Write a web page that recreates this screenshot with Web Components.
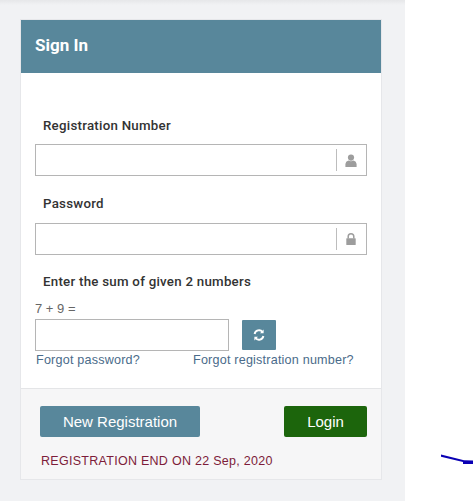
<!DOCTYPE html>
<html>
<head>
<meta charset="utf-8">
<title>Sign In</title>
<style>
  html, body { margin: 0; height: 100%; background: #fff; overflow: hidden; }
  body { font-family: "Liberation Sans", Arial, sans-serif; }
</style>
</head>
<body>

<login-page>
  <sign-in-card title="Sign In">
    <form-field label="Registration Number" icon="user"></form-field>
    <form-field label="Password" icon="lock" style="margin-top:20px;--label-gap:11px"></form-field>
    <captcha-field label="Enter the sum of given 2 numbers" sum="7 + 9 ="></captcha-field>
    <div slot="footer">
      <action-button color="#58879b" width="160">New Registration</action-button>
      <action-button color="#1c650c" width="83">Login</action-button>
    </div>
    <span slot="notice">REGISTRATION END ON 22 Sep, 2020</span>
  </sign-in-card>
</login-page>

<script>
// outer page: grey column with the card, white strip on the right
class LoginPage extends HTMLElement {
  constructor() {
    super();
    this.attachShadow({ mode: 'open' });
    this.shadowRoot.innerHTML = `
      <style>
        :host { display: flex; width: 473px; height: 501px; position: relative; }
        .column {
          width: 405px;
          height: 501px;
          box-sizing: border-box;
          padding: 20px 24px 0 21px;
          background: linear-gradient(#e6e7e9, #f1f2f4 5px);
        }
        svg { position: absolute; left: 441px; top: 453px; }
      </style>
      <div class="column"><slot></slot></div>
      <svg width="32" height="12" viewBox="0 0 32 12">
        <path d="M0 1.4 L0 3.8 L22 9 L22 11 L32 11 L32 7.6 L23 7.2 Z" fill="#0a00b4"/>
      </svg>
    `;
  }
}
customElements.define('login-page', LoginPage);

class SignInCard extends HTMLElement {
  constructor() {
    super();
    this.attachShadow({ mode: 'open' });
    this.shadowRoot.innerHTML = `
      <style>
        :host { display: block; width: 360px; height: 459px; }
        .card {
          height: 100%;
          box-sizing: border-box;
          display: flex;
          flex-direction: column;
          background: #fff;
          box-shadow: 0 0 0 1px #e6e7ea;
        }
        header {
          height: 53px;
          flex: none;
          box-sizing: border-box;
          padding-left: 14px;
          background: #58879b;
          color: #fff;
          font: 700 17px/51px Roboto, "Liberation Sans", sans-serif;
        }
        .body { height: 315px; flex: none; box-sizing: border-box; padding: 45px 14px 0; }
        footer {
          flex: 1;
          box-sizing: border-box;
          padding: 17px 14px 0 19px;
          background: #f6f6f7;
          border-top: 1px solid #e4e5e7;
        }
        ::slotted([slot=footer]) { display: flex; justify-content: space-between; }
        .notice {
          margin: 16px 0 0 1px;
          font-size: 12.5px;
          line-height: 16px;
          letter-spacing: 0.28px;
          color: #7d1c3a;
        }
      </style>
      <div class="card">
        <header></header>
        <div class="body"><slot></slot></div>
        <footer>
          <slot name="footer"></slot>
          <div class="notice"><slot name="notice"></slot></div>
        </footer>
      </div>
    `;
    this.shadowRoot.querySelector('header').textContent = this.getAttribute('title');
    this.removeAttribute('title');
  }
}
customElements.define('sign-in-card', SignInCard);

const ICONS = {
  // bootstrap-style user and lock glyphs
  user: '<svg width="12" height="13" viewBox="0 0 12 13"><circle cx="6" cy="3.6" r="3.1" fill="#9d9d9d"/><path d="M0.4 13 V10 Q0.6 7.6 3.4 6.6 Q6 8 8.6 6.6 Q11.4 7.6 11.6 10 V13Z" fill="#9d9d9d"/></svg>',
  lock: '<svg width="10" height="12" viewBox="0 0 10 12"><path d="M2.2 5.5 V3.6 a2.8 2.8 0 0 1 5.6 0 V5.5" fill="none" stroke="#9d9d9d" stroke-width="1.5"/><rect x="0.3" y="5.2" width="9.4" height="6.8" rx="0.6" fill="#9d9d9d"/></svg>'
};

class FormField extends HTMLElement {
  constructor() {
    super();
    this.attachShadow({ mode: 'open' });
    this.shadowRoot.innerHTML = `
      <style>
        :host { display: block; }
        label {
          display: block;
          height: 16px;
          margin: 0 0 var(--label-gap, 10px) 8px;
          font: 500 13.3px/16px Roboto, "Liberation Sans", sans-serif;
          letter-spacing: 0.25px;
          color: #333;
        }
        .box {
          display: flex;
          height: 32px;
          box-sizing: border-box;
          border: 1px solid #b5b5b5;
          background: #fff;
        }
        input { flex: 1; min-width: 0; border: 0; outline: 0; padding: 0 8px; background: none; }
        .addon {
          flex: none;
          width: 29px;
          margin: 4px 0;
          border-left: 1px solid #bdbdbd;
          display: flex;
          align-items: center;
          justify-content: center;
        }
        .addon svg { margin-right: 2px; }
      </style>
      <label></label>
      <div class="box">
        <input type="text">
        <span class="addon">${ICONS[this.getAttribute('icon')]}</span>
      </div>
    `;
    this.shadowRoot.querySelector('label').textContent = this.getAttribute('label');
  }
}
customElements.define('form-field', FormField);

class CaptchaField extends HTMLElement {
  constructor() {
    super();
    this.attachShadow({ mode: 'open' });
    this.shadowRoot.innerHTML = `
      <style>
        :host { display: block; margin-top: 19px; font-family: "Liberation Sans", sans-serif; }
        .title {
          margin: 0 0 12px 8px;
          font: 500 13.3px/16px Roboto, "Liberation Sans", sans-serif;
          letter-spacing: 0.25px;
          color: #333;
        }
        .sum { font-size: 13px; line-height: 14px; color: #666; margin-bottom: 3px; }
        .row { display: flex; align-items: center; gap: 13px; }
        input {
          width: 194px;
          height: 32px;
          box-sizing: border-box;
          border: 1px solid #b5b5b5;
          outline: 0;
          padding: 0 8px;
        }
        button {
          width: 34px;
          height: 30px;
          padding: 0;
          border: 0;
          border-radius: 1px;
          background: #58879b;
          display: flex;
          align-items: center;
          justify-content: center;
        }
        .links {
          display: flex;
          gap: 53px;
          margin: 2px 0 0 1px;
          font-size: 12.6px;
          line-height: 15px;
          letter-spacing: 0.2px;
        }
        a { color: #4a6b8a; text-decoration: none; }
      </style>
      <div class="title"></div>
      <div class="sum"></div>
      <div class="row">
        <input type="text">
        <button type="button" aria-label="Refresh">
          <svg width="12" height="12" viewBox="0 0 12 12" fill="none" stroke="#fff" stroke-width="1.9">
            <path d="M1.6 5 A4.5 4.5 0 0 1 9.6 3"/>
            <path d="M10.4 7 A4.5 4.5 0 0 1 2.4 9"/>
            <path d="M10.6 0.6 V4.2 H7 Z" fill="#fff" stroke="none"/>
            <path d="M1.4 11.4 V7.8 H5 Z" fill="#fff" stroke="none"/>
          </svg>
        </button>
      </div>
      <div class="links">
        <a href="#">Forgot password?</a>
        <a href="#">Forgot registration number?</a>
      </div>
    `;
    this.shadowRoot.querySelector('.title').textContent = this.getAttribute('label');
    this.shadowRoot.querySelector('.sum').textContent = this.getAttribute('sum');
  }
}
customElements.define('captcha-field', CaptchaField);

class ActionButton extends HTMLElement {
  constructor() {
    super();
    this.attachShadow({ mode: 'open' });
    this.shadowRoot.innerHTML = `
      <style>
        :host { display: block; }
        button {
          display: block;
          width: ${this.getAttribute('width')}px;
          height: 31px;
          padding: 0;
          border: 0;
          border-radius: 2px;
          background: ${this.getAttribute('color')};
          color: #fff;
          font: 15px "Liberation Sans", sans-serif;
        }
      </style>
      <button type="button"><slot></slot></button>
    `;
  }
}
customElements.define('action-button', ActionButton);
</script>
</body>
</html>
